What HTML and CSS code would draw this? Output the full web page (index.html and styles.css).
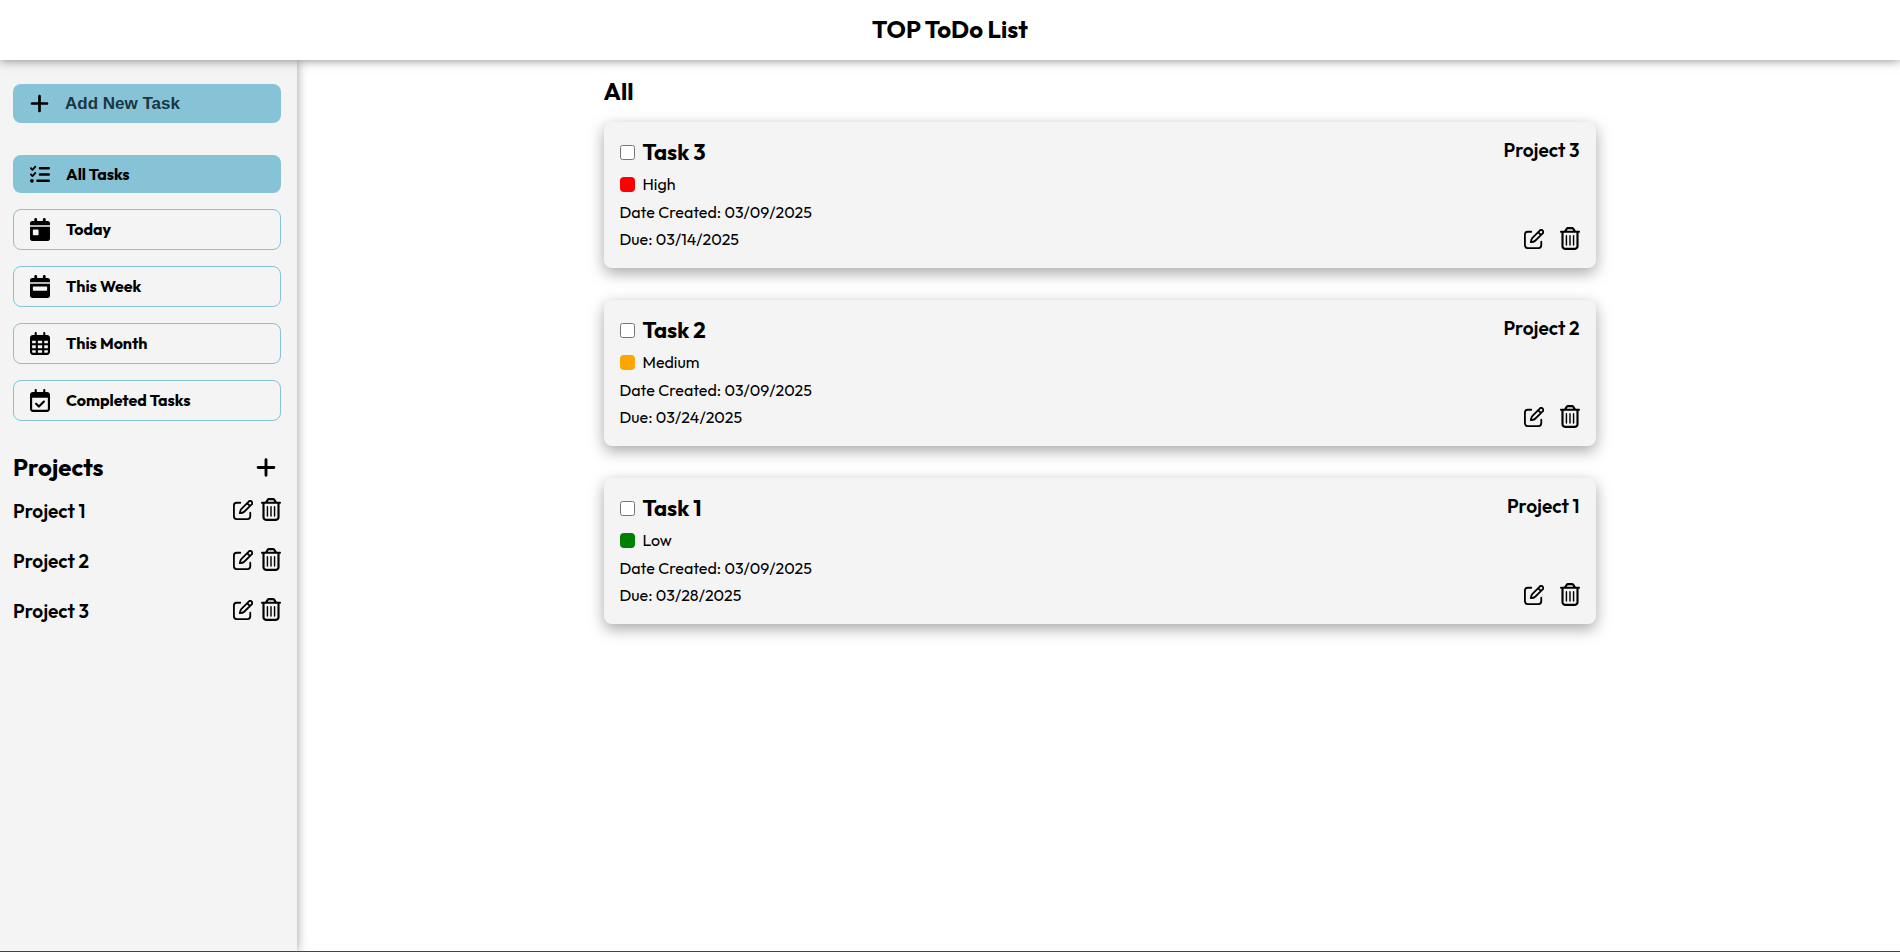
FILE: index.html
```html
<!DOCTYPE html>
<html lang="en">
<head>
<meta charset="utf-8">
<title>TOP ToDo List</title>
<link rel="stylesheet" href="styles.css">
</head>
<body>
<svg class="sprite" aria-hidden="true">
  <symbol id="plus" viewBox="0 0 448 512"><path d="M256 80c0-17.7-14.3-32-32-32s-32 14.3-32 32V224H48c-17.7 0-32 14.3-32 32s14.3 32 32 32H192V432c0 17.7 14.3 32 32 32s32-14.3 32-32V288H400c17.7 0 32-14.3 32-32s-14.3-32-32-32H256V80z"/></symbol>
  <symbol id="list" viewBox="0 0 512 512"><path d="M152.100 38.200c9.900 8.900 10.700 24 1.800 33.900l-72 80c-4.400 4.900-10.600 7.800-17.200 7.900s-12.900-2.400-17.600-7L7 113C-2.300 103.600-2.300 88.400 7 79s24.600-9.400 33.900 0l22.100 22.100 55.100-61.200c8.900-9.900 24-10.700 33.900-1.800zm0 160c9.900 8.900 10.700 24 1.800 33.900l-72 80c-4.400 4.900-10.600 7.800-17.200 7.900s-12.900-2.400-17.600-7L7 273c-9.400-9.400-9.400-24.600 0-33.900s24.600-9.400 33.900 0l22.100 22.100 55.100-61.200c8.900-9.900 24-10.700 33.900-1.800zM224 96c0-17.700 14.300-32 32-32H480c17.700 0 32 14.300 32 32s-14.300 32-32 32H256c-17.700 0-32-14.300-32-32zm0 160c0-17.700 14.300-32 32-32H480c17.700 0 32 14.300 32 32s-14.300 32-32 32H256c-17.700 0-32-14.300-32-32zM160 416c0-17.700 14.300-32 32-32H480c17.700 0 32 14.300 32 32s-14.300 32-32 32H192c-17.700 0-32-14.300-32-32zM48 368a48 48 0 1 1 0 96 48 48 0 1 1 0-96z"/></symbol>
  <symbol id="day" viewBox="0 0 448 512"><path d="M128 0c17.700 0 32 14.300 32 32V64H288V32c0-17.700 14.300-32 32-32s32 14.300 32 32V64h48c26.500 0 48 21.500 48 48v48H0V112C0 85.500 21.500 64 48 64H96V32c0-17.700 14.300-32 32-32zM0 192H448V464c0 26.500-21.500 48-48 48H48c-26.500 0-48-21.500-48-48V192zm80 64c-8.800 0-16 7.200-16 16v96c0 8.800 7.200 16 16 16h96c8.800 0 16-7.200 16-16V272c0-8.800-7.200-16-16-16H80z"/></symbol>
  <symbol id="week" viewBox="0 0 448 512"><path d="M128 0c17.700 0 32 14.300 32 32V64H288V32c0-17.700 14.300-32 32-32s32 14.300 32 32V64h48c26.500 0 48 21.500 48 48v48H0V112C0 85.500 21.500 64 48 64H96V32c0-17.700 14.300-32 32-32zM0 192H448V464c0 26.500-21.500 48-48 48H48c-26.500 0-48-21.500-48-48V192zm80 64c-8.800 0-16 7.200-16 16v64c0 8.800 7.200 16 16 16H368c8.800 0 16-7.200 16-16V272c0-8.800-7.200-16-16-16H80z"/></symbol>
  <symbol id="month" viewBox="0 0 448 512"><path d="M152 24c0-13.300-10.700-24-24-24s-24 10.700-24 24V64H64C28.700 64 0 92.700 0 128v16 48V448c0 35.300 28.700 64 64 64H384c35.300 0 64-28.700 64-64V192 144 128c0-35.300-28.700-64-64-64H344V24c0-13.300-10.700-24-24-24s-24 10.700-24 24V64H152V24zM48 192h80v56H48V192zm0 104h80v64H48V296zm128 0h96v64H176V296zm144 0h80v64H320V296zm80-48H320V192h80v56zm0 160v40c0 8.800-7.200 16-16 16H320V408h80zm-128 0v56H176V408h96zm-144 0v56H64c-8.800 0-16-7.200-16-16V408h80zM272 248H176V192h96v56z"/></symbol>
  <symbol id="done" viewBox="0 0 448 512"><path d="M128 0c13.300 0 24 10.700 24 24V64H296V24c0-13.300 10.700-24 24-24s24 10.700 24 24V64h40c35.300 0 64 28.700 64 64v16 48V448c0 35.300-28.700 64-64 64H64c-35.300 0-64-28.700-64-64V192 144 128C0 92.700 28.700 64 64 64h40V24c0-13.300 10.700-24 24-24zM400 192H48V448c0 8.800 7.200 16 16 16H384c8.800 0 16-7.200 16-16V192zM329 297L217 409c-9.400 9.400-24.600 9.400-33.900 0l-64-64c-9.400-9.400-9.400-24.600 0-33.900s24.600-9.400 33.900 0l47 47 95-95c9.400-9.400 24.600-9.400 33.900 0s9.400 24.600 0 33.900z"/></symbol>
  <symbol id="edit" viewBox="2 1 22 22"><g fill="none" stroke="currentColor" stroke-width="2" stroke-linecap="round" stroke-linejoin="round"><path d="M10 4H6a3 3 0 0 0-3 3v12a3 3 0 0 0 3 3h12a3 3 0 0 0 3-3v-4"/><path d="M9.500 15.500c.2-2.200.6-3.600 1.800-4.800l8-8a2.200 2.200 0 0 1 3.200 3.200l-8.200 8c-1.200 1.200-2.600 1.500-4.800 1.600zM17.500 4.500l3 3"/></g></symbol>
  <symbol id="trash" viewBox="0 0 448 512"><path d="M170.500 51.600L151.500 80h145l-19-28.400c-1.500-2.200-4-3.600-6.700-3.600H177.100c-2.700 0-5.200 1.300-6.700 3.600zm147-26.600L354.200 80H368h48 8c13.300 0 24 10.700 24 24s-10.700 24-24 24h-8V432c0 44.200-35.800 80-80 80H112c-44.200 0-80-35.800-80-80V128H24c-13.300 0-24-10.700-24-24S10.700 80 24 80h8H80 93.800l36.700-55.100C140.900 9.400 158.400 0 177.100 0h93.700c18.700 0 36.200 9.400 46.600 24.900zM80 128V432c0 17.700 14.300 32 32 32H336c17.700 0 32-14.300 32-32V128H80zm80 64V400c0 8.800-7.200 16-16 16s-16-7.200-16-16V192c0-8.800 7.200-16 16-16s16 7.200 16 16zm80 0V400c0 8.800-7.200 16-16 16s-16-7.200-16-16V192c0-8.800 7.200-16 16-16s16 7.200 16 16zm80 0V400c0 8.800-7.200 16-16 16s-16-7.200-16-16V192c0-8.800 7.200-16 16-16s16 7.200 16 16z"/></symbol>
</svg>
<header class="header"><h1 class="title">TOP ToDo List</h1></header>
<div class="layout">
  <aside class="sidebar">
    <button class="menu-button add" type="button"><svg class="icon"><use href="#plus"/></svg>Add New Task</button>
    <nav class="filters">
      <button class="menu-button active" type="button"><svg class="icon"><use href="#list"/></svg>All Tasks</button>
      <button class="menu-button outlined" type="button"><svg class="icon"><use href="#day"/></svg>Today</button>
      <button class="menu-button outlined" type="button"><svg class="icon"><use href="#week"/></svg>This Week</button>
      <button class="menu-button outlined" type="button"><svg class="icon"><use href="#month"/></svg>This Month</button>
      <button class="menu-button outlined" type="button"><svg class="icon"><use href="#done"/></svg>Completed Tasks</button>
    </nav>
    <section class="projects">
      <div class="projects-head"><h2 class="heading">Projects</h2><button class="icon-button add-project" type="button" aria-label="Add project"><svg class="icon"><use href="#plus"/></svg></button></div>
      <ul class="project-list">
        <li class="project"><h3 class="project-name">Project 1</h3><div class="actions"><button class="icon-button" type="button" aria-label="Edit Project 1"><svg class="icon edit"><use href="#edit"/></svg></button><button class="icon-button" type="button" aria-label="Delete Project 1"><svg class="icon"><use href="#trash"/></svg></button></div></li>
        <li class="project"><h3 class="project-name">Project 2</h3><div class="actions"><button class="icon-button" type="button" aria-label="Edit Project 2"><svg class="icon edit"><use href="#edit"/></svg></button><button class="icon-button" type="button" aria-label="Delete Project 2"><svg class="icon"><use href="#trash"/></svg></button></div></li>
        <li class="project"><h3 class="project-name">Project 3</h3><div class="actions"><button class="icon-button" type="button" aria-label="Edit Project 3"><svg class="icon edit"><use href="#edit"/></svg></button><button class="icon-button" type="button" aria-label="Delete Project 3"><svg class="icon"><use href="#trash"/></svg></button></div></li>
      </ul>
    </section>
  </aside>
  <main class="main">
    <div class="content">
      <h2 class="heading">All</h2>
      <div class="cards">
        <article class="card">
          <div class="details">
            <label class="task"><input class="check" type="checkbox">Task 3</label>
            <p class="priority"><span class="swatch high"></span>High</p>
            <p class="date">Date Created: 03/09/2025</p>
            <p class="date">Due: 03/14/2025</p>
          </div>
          <div class="side"><h3 class="project-name">Project 3</h3><div class="actions wide"><button class="icon-button" type="button" aria-label="Edit Task 3"><svg class="icon edit"><use href="#edit"/></svg></button><button class="icon-button" type="button" aria-label="Delete Task 3"><svg class="icon"><use href="#trash"/></svg></button></div></div>
        </article>
        <article class="card">
          <div class="details">
            <label class="task"><input class="check" type="checkbox">Task 2</label>
            <p class="priority"><span class="swatch medium"></span>Medium</p>
            <p class="date">Date Created: 03/09/2025</p>
            <p class="date">Due: 03/24/2025</p>
          </div>
          <div class="side"><h3 class="project-name">Project 2</h3><div class="actions wide"><button class="icon-button" type="button" aria-label="Edit Task 2"><svg class="icon edit"><use href="#edit"/></svg></button><button class="icon-button" type="button" aria-label="Delete Task 2"><svg class="icon"><use href="#trash"/></svg></button></div></div>
        </article>
        <article class="card">
          <div class="details">
            <label class="task"><input class="check" type="checkbox">Task 1</label>
            <p class="priority"><span class="swatch low"></span>Low</p>
            <p class="date">Date Created: 03/09/2025</p>
            <p class="date">Due: 03/28/2025</p>
          </div>
          <div class="side"><h3 class="project-name">Project 1</h3><div class="actions wide"><button class="icon-button" type="button" aria-label="Edit Task 1"><svg class="icon edit"><use href="#edit"/></svg></button><button class="icon-button" type="button" aria-label="Delete Task 1"><svg class="icon"><use href="#trash"/></svg></button></div></div>
        </article>
      </div>
    </div>
  </main>
</div>
</body>
</html>
```
FILE: styles.css
```css
* { box-sizing: border-box; margin: 0; padding: 0; }

body {
  display: flex;
  flex-direction: column;
  min-height: 100vh;
  border-bottom: 1px solid #444;
  background: #fff;
  color: #000;
  font-family: Outfit, Lato, sans-serif;
  font-size: 16px;
}

.sprite { display: none; }

.header {
  z-index: 1;
  display: flex;
  align-items: center;
  justify-content: center;
  padding: 14px 16px 16px;
  background: #fff;
  box-shadow: 0 0 10px rgba(0, 0, 0, 0.5);
}

.title, .heading { font-size: 24px; line-height: 30px; font-weight: 700; }

.layout { display: flex; flex: 1; }

.sidebar {
  flex: none;
  width: 297px;
  padding: 24px 16px 24px 13px;
  background: #f4f4f4;
  box-shadow: 0 0 10px rgba(0, 0, 0, 0.4);
}

.menu-button {
  display: flex;
  align-items: center;
  gap: 16px;
  width: 100%;
  height: 38px;
  padding: 0 17px;
  border: 0;
  border-radius: 8px;
  background: transparent;
  color: #000;
  font: inherit;
  font-weight: 700;
  text-align: left;
  cursor: pointer;
}

.menu-button.outlined { height: 41px; padding: 0 16px 1px; border: 1px solid #86c3d7; }
.menu-button.active, .menu-button.add { background: #86c3d7; }
.menu-button.add {
  height: 39px;
  margin-bottom: 32px;
  color: #1b3741;
  font-family: "Liberation Sans", sans-serif;
  font-size: 17px;
}

.icon { display: block; width: 20px; height: 23px; fill: #000; color: #000; }
.menu-button.add .icon { width: 19px; }
.icon.edit { height: 20px; }

.filters { display: flex; flex-direction: column; gap: 16px; }

.projects { margin-top: 31px; }
.projects-head { display: flex; align-items: center; justify-content: space-between; padding-right: 5px; }
.project-list { display: flex; flex-direction: column; gap: 24px; margin-top: 16px; list-style: none; }
.project { display: flex; justify-content: space-between; align-items: center; height: 26px; }
.project-name { font-size: 19px; line-height: 24px; font-weight: 600; }

.actions { display: flex; align-items: center; gap: 8px; padding-bottom: 3px; }
.actions.wide { gap: 16px; }
.icon-button { border: 0; background: transparent; cursor: pointer; }

.main { display: flex; flex: 1; justify-content: center; padding: 16px 16px 16px 18px; }
.content { width: 100%; max-width: 992px; }
.cards { display: flex; flex-direction: column; gap: 32px; margin-top: 16px; }

.card {
  display: flex;
  justify-content: space-between;
  padding: 16px 16px 15px;
  border-radius: 8px;
  background: #f4f4f4;
  box-shadow: 0 5px 15px rgba(0, 0, 0, 0.35);
}

.task { display: flex; align-items: center; gap: 8px; font-size: 22px; line-height: 28px; font-weight: 700; }
.check { width: 15px; height: 15px; }
.priority { display: flex; align-items: center; gap: 8px; margin: 5px 0 2px; line-height: 26px; }
.date { line-height: 27px; }
.swatch { width: 15px; height: 15px; border-radius: 4px; }
.high { background: red; }
.medium { background: orange; }
.low { background: green; }

.side { display: flex; flex-direction: column; justify-content: space-between; align-items: flex-end; }
```
